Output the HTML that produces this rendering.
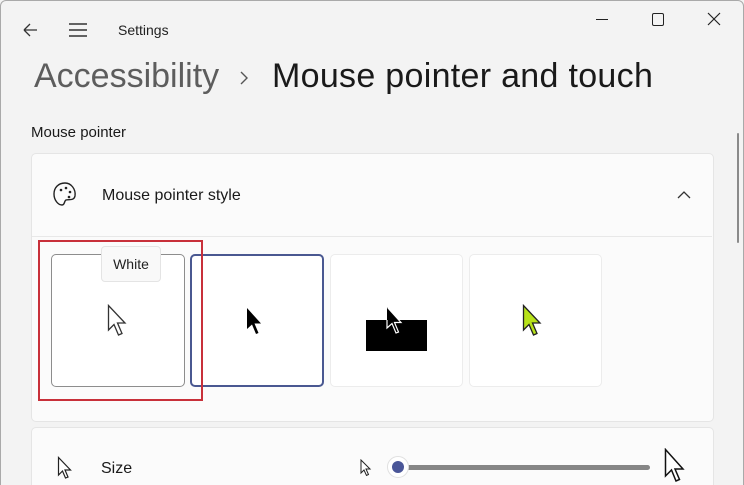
<!DOCTYPE html><html style="width:744px;height:485px;overflow:hidden"><head><style>
body{margin:0;width:744px;height:485px;overflow:hidden;background:#f3f3f3;font-family:"Liberation Sans",sans-serif;position:relative}
.a{position:absolute}
.card{position:absolute;background:#fbfbfb;border:1px solid #e5e5e5;border-radius:5px}
.tile{position:absolute;background:#fff;border:1px solid #ececec;border-radius:5px;box-sizing:border-box}
</style></head><body>
<div class="a" style="left:0;top:0;width:742px;height:490px;border:1px solid #a9a9a9;border-radius:6px"></div>
<svg class="a" style="left:20px;top:20px" width="20" height="20"><path d="M4 10H17M4 10L10 4M4 10L10 16" stroke="#333" stroke-width="1.3" fill="none"/></svg>
<svg class="a" style="left:68px;top:21px" width="20" height="18"><path d="M1 3H19M1 9H19M1 15H19" stroke="#333" stroke-width="1.4"/></svg>
<div class="a" style="left:118px;top:22px;font-size:14px;color:#222">Settings</div>
<div class="a" style="left:596px;top:19px;width:12px;height:1px;background:#222"></div>
<div class="a" style="left:652px;top:13px;width:10px;height:11px;border:1.3px solid #222;border-radius:2px"></div>
<svg class="a" style="left:707px;top:12px" width="14" height="14"><path d="M1 1L13 13M13 1L1 13" stroke="#222" stroke-width="1.2"/></svg>
<div class="a" style="left:34px;top:57px;font-size:34px;color:#5d5d5d">Accessibility</div>
<svg class="a" style="left:238px;top:70px" width="12" height="16"><path d="M3 2L9 8L3 14" stroke="#555" stroke-width="1.4" fill="none"/></svg>
<div class="a" style="left:272px;top:57px;font-size:34px;color:#1a1a1a;letter-spacing:0.3px">Mouse pointer and touch</div>
<div class="a" style="left:31px;top:124px;font-size:15px;color:#1a1a1a">Mouse pointer</div>
<div class="a" style="left:737px;top:133px;width:2px;height:110px;background:#8a8a8a;border-radius:1px"></div>
<div class="card" style="left:31px;top:153px;width:681px;height:267px"></div>
<div class="a" style="left:32px;top:236px;width:680px;height:1px;background:#e8e8e8"></div>
<svg class="a" style="left:52px;top:181px" width="26" height="28"><path d="M13 2C6 2 2 7 2 13C2 19 6 24 10 24C13 24 12 20 14 19C17 18 22 20 23 15C24 8 19 2 13 2Z" stroke="#222" stroke-width="1.4" fill="none"/><circle cx="9" cy="9" r="1.3" fill="#222"/><circle cx="14" cy="7" r="1.3" fill="#222"/><circle cx="18" cy="11" r="1.3" fill="#222"/><circle cx="17" cy="16" r="1.3" fill="#222"/></svg>
<div class="a" style="left:102px;top:187px;font-size:16px;color:#1a1a1a">Mouse pointer style</div>
<svg class="a" style="left:677px;top:190px" width="14" height="10"><path d="M1 8L7 2L13 8" stroke="#333" stroke-width="1.3" fill="none"/></svg>
<div class="tile" style="left:51px;top:254px;width:134px;height:133px;border:1px solid #8d8d8d"></div>
<div class="tile" style="left:190px;top:254px;width:134px;height:133px;border:2px solid #4a5891"></div>
<div class="tile" style="left:330px;top:254px;width:133px;height:133px"></div>
<div class="tile" style="left:469px;top:254px;width:133px;height:133px"></div>
<div class="a" style="left:38px;top:240px;width:161px;height:157px;border:2px solid #c8303a"></div>
<div class="a" style="left:101px;top:246px;width:60px;height:36px;background:#f9f9f9;border:1px solid #e4e4e4;border-radius:4px;box-sizing:border-box;font-size:14px;color:#222;text-align:center;line-height:34px">White</div>
<svg class="a" style="left:107px;top:304px" width="24" height="36"><path d="M1.5 1.5V26L7 20.5L11.5 31L15 29.5L10.5 19H18Z" fill="#fff" stroke="#333" stroke-width="1.3"/></svg>
<svg class="a" style="left:246px;top:307px" width="20" height="30"><path d="M1 1V22L6 17.5L10 27L12.5 26L8.5 16.5H15Z" fill="#000"/></svg>
<div class="a" style="left:366px;top:320px;width:61px;height:31px;background:#000"></div>
<svg class="a" style="left:386px;top:306px" width="20" height="30"><path d="M1 1V22L6 17.5L10 27L12.5 26L8.5 16.5H15Z" fill="#000" stroke="#fff" stroke-width="1.2"/><path d="M1 1V14H6L1 1" fill="#000"/></svg>
<svg class="a" style="left:522px;top:304px" width="24" height="36"><path d="M1.5 1.5V26L7 20.5L11.5 31L15 29.5L10.5 19H18Z" fill="#b7e21a" stroke="#222" stroke-width="1.3"/></svg>
<div class="card" style="left:31px;top:427px;width:681px;height:70px"></div>
<svg class="a" style="left:57px;top:456px" width="18" height="26"><path d="M1.5 1.5V19L5.5 15L8.5 22L11 21L8 14H13.5Z" fill="#fff" stroke="#222" stroke-width="1.2"/></svg>
<div class="a" style="left:101px;top:460px;font-size:16px;color:#1a1a1a">Size</div>
<svg class="a" style="left:360px;top:459px" width="14" height="20"><path d="M1 1V14L4 11L6.5 16.5L8.5 15.5L6 10H10Z" fill="#fff" stroke="#222" stroke-width="1"/></svg>
<div class="a" style="left:400px;top:465px;width:250px;height:5px;background:#868686;border-radius:3px"></div>
<div class="a" style="left:387px;top:456px;width:22px;height:22px;border-radius:50%;background:#fff;border:1px solid #e0e0e0;box-sizing:border-box"></div>
<div class="a" style="left:392px;top:461px;width:12px;height:12px;border-radius:50%;background:#4a5698"></div>
<svg class="a" style="left:664px;top:448px" width="26" height="36"><path d="M1.5 1.5V28L7.5 22L12 33L15.5 31.5L11 21H19Z" fill="#fff" stroke="#111" stroke-width="1.5"/></svg>
</body></html>
